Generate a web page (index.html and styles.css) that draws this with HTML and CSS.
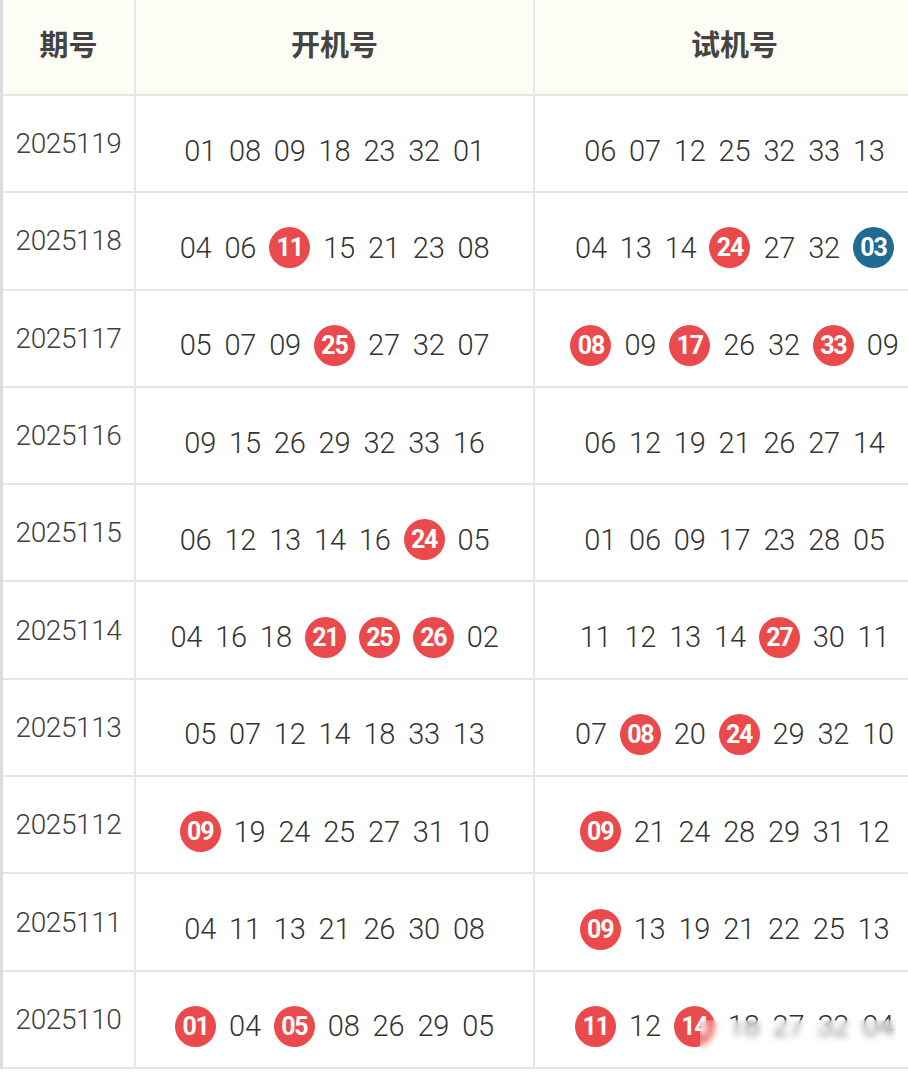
FILE: index.html
```html
<!DOCTYPE html>
<html lang="zh">
<head>
<meta charset="utf-8">
<title>开机号 试机号</title>
<link rel="stylesheet" href="styles.css">
</head>
<body>
<div class="sheet">
  <div class="grid">
    <div class="cell head">期号</div>
    <div class="cell head">开机号</div>
    <div class="cell head">试机号</div>

    <div class="cell period">2025119</div>
    <div class="cell nums"><span class="n">01</span><span class="n">08</span><span class="n">09</span><span class="n">18</span><span class="n">23</span><span class="n">32</span><span class="n">01</span></div>
    <div class="cell nums"><span class="n">06</span><span class="n">07</span><span class="n">12</span><span class="n">25</span><span class="n">32</span><span class="n">33</span><span class="n">13</span></div>

    <div class="cell period">2025118</div>
    <div class="cell nums"><span class="n">04</span><span class="n">06</span><span class="ball">11</span><span class="n">15</span><span class="n">21</span><span class="n">23</span><span class="n">08</span></div>
    <div class="cell nums"><span class="n">04</span><span class="n">13</span><span class="n">14</span><span class="ball">24</span><span class="n">27</span><span class="n">32</span><span class="ball blue">03</span></div>

    <div class="cell period">2025117</div>
    <div class="cell nums"><span class="n">05</span><span class="n">07</span><span class="n">09</span><span class="ball">25</span><span class="n">27</span><span class="n">32</span><span class="n">07</span></div>
    <div class="cell nums"><span class="ball">08</span><span class="n">09</span><span class="ball">17</span><span class="n">26</span><span class="n">32</span><span class="ball">33</span><span class="n">09</span></div>

    <div class="cell period">2025116</div>
    <div class="cell nums"><span class="n">09</span><span class="n">15</span><span class="n">26</span><span class="n">29</span><span class="n">32</span><span class="n">33</span><span class="n">16</span></div>
    <div class="cell nums"><span class="n">06</span><span class="n">12</span><span class="n">19</span><span class="n">21</span><span class="n">26</span><span class="n">27</span><span class="n">14</span></div>

    <div class="cell period">2025115</div>
    <div class="cell nums"><span class="n">06</span><span class="n">12</span><span class="n">13</span><span class="n">14</span><span class="n">16</span><span class="ball">24</span><span class="n">05</span></div>
    <div class="cell nums"><span class="n">01</span><span class="n">06</span><span class="n">09</span><span class="n">17</span><span class="n">23</span><span class="n">28</span><span class="n">05</span></div>

    <div class="cell period">2025114</div>
    <div class="cell nums"><span class="n">04</span><span class="n">16</span><span class="n">18</span><span class="ball">21</span><span class="ball">25</span><span class="ball">26</span><span class="n">02</span></div>
    <div class="cell nums"><span class="n">11</span><span class="n">12</span><span class="n">13</span><span class="n">14</span><span class="ball">27</span><span class="n">30</span><span class="n">11</span></div>

    <div class="cell period">2025113</div>
    <div class="cell nums"><span class="n">05</span><span class="n">07</span><span class="n">12</span><span class="n">14</span><span class="n">18</span><span class="n">33</span><span class="n">13</span></div>
    <div class="cell nums"><span class="n">07</span><span class="ball">08</span><span class="n">20</span><span class="ball">24</span><span class="n">29</span><span class="n">32</span><span class="n">10</span></div>

    <div class="cell period">2025112</div>
    <div class="cell nums"><span class="ball">09</span><span class="n">19</span><span class="n">24</span><span class="n">25</span><span class="n">27</span><span class="n">31</span><span class="n">10</span></div>
    <div class="cell nums"><span class="ball">09</span><span class="n">21</span><span class="n">24</span><span class="n">28</span><span class="n">29</span><span class="n">31</span><span class="n">12</span></div>

    <div class="cell period">2025111</div>
    <div class="cell nums"><span class="n">04</span><span class="n">11</span><span class="n">13</span><span class="n">21</span><span class="n">26</span><span class="n">30</span><span class="n">08</span></div>
    <div class="cell nums"><span class="ball">09</span><span class="n">13</span><span class="n">19</span><span class="n">21</span><span class="n">22</span><span class="n">25</span><span class="n">13</span></div>

    <div class="cell period">2025110</div>
    <div class="cell nums"><span class="ball">01</span><span class="n">04</span><span class="ball">05</span><span class="n">08</span><span class="n">26</span><span class="n">29</span><span class="n">05</span></div>
    <div class="cell nums last"><span class="ball">11</span><span class="n">12</span><span class="ball">14</span><span class="n">18</span><span class="n">27</span><span class="n">32</span><span class="n">04</span><span class="mark"></span></div>
  </div>
</div>
</body>
</html>
```

FILE: styles.css
```css
html, body {
  margin: 0;
  padding: 0;
  background: #ffffff;
}

body {
  width: 908px;
  height: 1074px;
  overflow: hidden;
  font-family: Roboto, "Noto Sans CJK SC", sans-serif;
  color: #3d3d3d;
}

.sheet {
  width: 908px;
  overflow: hidden;
}

.grid {
  display: grid;
  width: 936px;
  grid-template-columns: 133px 399px 401px;
  grid-template-rows: 96px repeat(10, 97.3px);
  border-left: 3px solid #dcdcdc;
}

.cell {
  box-sizing: border-box;
  border-right: 2px solid #e8e8e8;
  border-bottom: 2px solid #e6e6e6;
  display: flex;
  align-items: center;
  justify-content: center;
}

.head {
  background: #fdfcf5;
  font-family: "Noto Sans CJK SC", sans-serif;
  font-weight: 700;
  font-size: 29px;
  color: #444444;
  padding-bottom: 8px;
  border-bottom-color: #e6e6e0;
}

.period {
  font-size: 28px;
  font-weight: 300;
  color: #3f3f3f;
  letter-spacing: -0.4px;
}

.nums {
  position: relative;
  gap: 13px;
  padding-top: 14px;
  font-size: 29px;
  font-weight: 300;
  color: #333333;
}

.n {
  line-height: 40px;
  letter-spacing: -0.2px;
}

.ball {
  width: 41px;
  height: 41px;
  border-radius: 50%;
  background: #ea4a4b;
  color: #ffffff;
  font-weight: 700;
  font-size: 25px;
  letter-spacing: -1.2px;
  display: flex;
  align-items: center;
  justify-content: center;
  flex-shrink: 0;
}

.ball.blue {
  background: #1f6b93;
}

.mark {
  position: absolute;
  left: 165px;
  top: 48px;
  width: 196px;
  height: 46px;
  backdrop-filter: blur(3px);
  background: linear-gradient(180deg, rgba(255,255,255,0.15), rgba(255,255,255,0.45));
}
```
